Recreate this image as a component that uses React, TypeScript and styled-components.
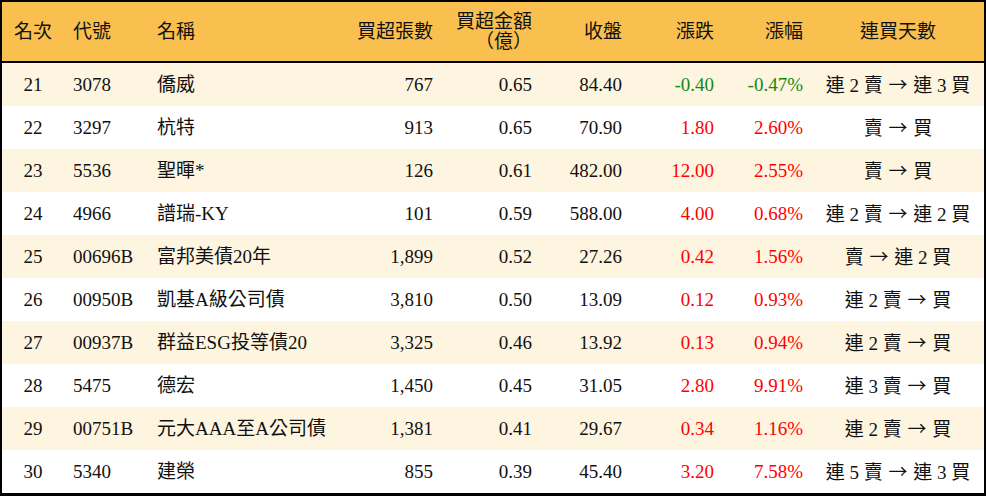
import React from "react";
import styled, { createGlobalStyle } from "styled-components";

const Global = createGlobalStyle`
  html, body { margin: 0; padding: 0; background: #ffffff; }
  body { font-family: "Liberation Serif", "Noto Sans CJK TC", serif; }
`;

type Align = "left" | "right" | "center";

interface Col {
  key: string;
  width: number;
  align: Align;
  pad: string;
}

const cols: Col[] = [
  { key: "rank", width: 62, align: "center", pad: "0" },
  { key: "code", width: 84, align: "left", pad: "0 0 0 9px" },
  { key: "name", width: 192, align: "left", pad: "0 0 0 9px" },
  { key: "vol", width: 102, align: "right", pad: "0 9px 0 0" },
  { key: "amt", width: 99, align: "right", pad: "0 9px 0 0" },
  { key: "close", width: 90, align: "right", pad: "0 9px 0 0" },
  { key: "chg", width: 92, align: "right", pad: "0 9px 0 0" },
  { key: "pct", width: 89, align: "right", pad: "0 9px 0 0" },
  { key: "days", width: 172, align: "center", pad: "0" },
];

interface Row {
  rank: string;
  code: string;
  name: string;
  vol: string;
  amt: string;
  close: string;
  chg: string;
  pct: string;
  from: string;
  to: string;
}

const rows: Row[] = [
  { rank: "21", code: "3078", name: "僑威", vol: "767", amt: "0.65", close: "84.40", chg: "-0.40", pct: "-0.47%", from: "連 2 賣", to: "連 3 買" },
  { rank: "22", code: "3297", name: "杭特", vol: "913", amt: "0.65", close: "70.90", chg: "1.80", pct: "2.60%", from: "賣", to: "買" },
  { rank: "23", code: "5536", name: "聖暉*", vol: "126", amt: "0.61", close: "482.00", chg: "12.00", pct: "2.55%", from: "賣", to: "買" },
  { rank: "24", code: "4966", name: "譜瑞-KY", vol: "101", amt: "0.59", close: "588.00", chg: "4.00", pct: "0.68%", from: "連 2 賣", to: "連 2 買" },
  { rank: "25", code: "00696B", name: "富邦美債20年", vol: "1,899", amt: "0.52", close: "27.26", chg: "0.42", pct: "1.56%", from: "賣", to: "連 2 買" },
  { rank: "26", code: "00950B", name: "凱基A級公司債", vol: "3,810", amt: "0.50", close: "13.09", chg: "0.12", pct: "0.93%", from: "連 2 賣", to: "買" },
  { rank: "27", code: "00937B", name: "群益ESG投等債20", vol: "3,325", amt: "0.46", close: "13.92", chg: "0.13", pct: "0.94%", from: "連 2 賣", to: "買" },
  { rank: "28", code: "5475", name: "德宏", vol: "1,450", amt: "0.45", close: "31.05", chg: "2.80", pct: "9.91%", from: "連 3 賣", to: "買" },
  { rank: "29", code: "00751B", name: "元大AAA至A公司債", vol: "1,381", amt: "0.41", close: "29.67", chg: "0.34", pct: "1.16%", from: "連 2 賣", to: "買" },
  { rank: "30", code: "5340", name: "建榮", vol: "855", amt: "0.39", close: "45.40", chg: "3.20", pct: "7.58%", from: "連 5 賣", to: "連 3 買" },
];

const headers: React.ReactNode[] = [
  "名次",
  "代號",
  "名稱",
  "買超張數",
  <>
    買超金額
    <br />
    （億）
  </>,
  "收盤",
  "漲跌",
  "漲幅",
  "連買天數",
];

const Frame = styled.div`
  width: 986px;
  box-sizing: border-box;
  border: 2px solid #000;
  border-bottom-width: 3px;
  overflow: hidden;
`;

const Table = styled.table`
  border-collapse: separate;
  border-spacing: 0;
  table-layout: fixed;
  width: 982px;
  font-size: 19px;
  color: #111;
`;

const HeadCell = styled.th<{ $align: Align; $pad: string }>`
  height: 61px;
  box-sizing: border-box;
  background: #f9c04f;
  border-bottom: 2px solid #000;
  font-weight: normal;
  text-align: ${(p) => p.$align};
  padding: ${(p) => p.$pad};
  line-height: 20px;
  vertical-align: middle;
  white-space: nowrap;
`;

const BodyRow = styled.tr<{ $striped: boolean }>`
  background: ${(p) => (p.$striped ? "#fef5e0" : "#ffffff")};
`;

const Cell = styled.td<{ $align: Align; $pad: string; $tone?: string }>`
  height: 43px;
  box-sizing: border-box;
  text-align: ${(p) => p.$align};
  padding: ${(p) => p.$pad};
  color: ${(p) => p.$tone ?? "#111"};
  vertical-align: middle;
  white-space: nowrap;
  line-height: 22px;
`;

const Arrow = styled.span`
  font-family: "Noto Sans CJK TC", sans-serif;
  display: inline-block;
  margin: 0 1px;
`;

const tone = (v: string) => (v.startsWith("-") ? "#138a13" : "#ff0000");

export default function App() {
  return (
    <>
      <Global />
      <Frame>
        <Table>
          <colgroup>
            {cols.map((c) => (
              <col key={c.key} style={{ width: c.width }} />
            ))}
          </colgroup>
          <thead>
            <tr>
              {headers.map((h, i) => (
                <HeadCell key={i} $align={cols[i].align} $pad={cols[i].pad}>
                  {h}
                </HeadCell>
              ))}
            </tr>
          </thead>
          <tbody>
            {rows.map((r, i) => (
              <BodyRow key={r.rank} $striped={i % 2 === 0}>
                {cols.map((c) => {
                  if (c.key === "days") {
                    return (
                      <Cell key={c.key} $align={c.align} $pad={c.pad}>
                        {r.from} <Arrow>→</Arrow> {r.to}
                      </Cell>
                    );
                  }
                  const v = r[c.key as keyof Row];
                  const t = c.key === "chg" || c.key === "pct" ? tone(r.chg) : undefined;
                  return (
                    <Cell key={c.key} $align={c.align} $pad={c.pad} $tone={t}>
                      {v}
                    </Cell>
                  );
                })}
              </BodyRow>
            ))}
          </tbody>
        </Table>
      </Frame>
    </>
  );
}
